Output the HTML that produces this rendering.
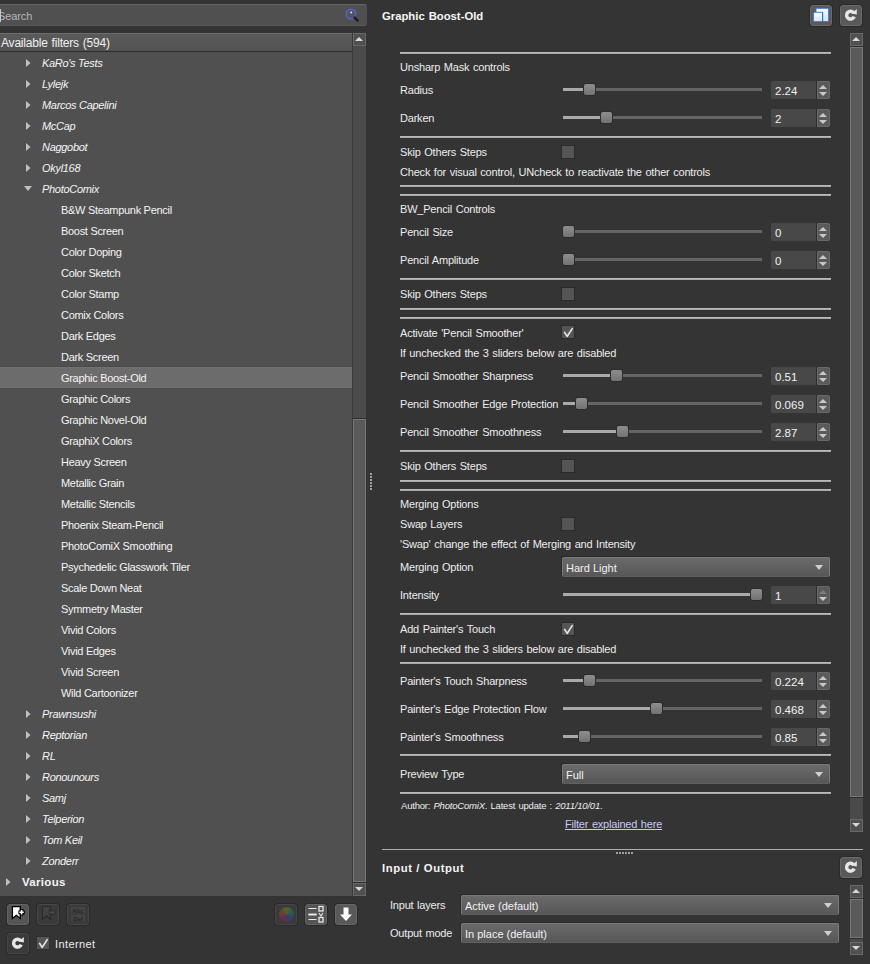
<!DOCTYPE html>
<html><head><meta charset="utf-8">
<style>
*{box-sizing:border-box;margin:0;padding:0}
html,body{width:870px;height:964px;overflow:hidden;background:#343434;font-family:"Liberation Sans",sans-serif;font-size:11px;color:#ececec}
.a{position:absolute}
.t{position:absolute;white-space:nowrap;line-height:13px;letter-spacing:-0.2px;word-spacing:0.8px}
/* left */
#search{left:-4px;top:4px;width:371px;height:22px;background:#505050;border-top:1px solid #666;border-bottom:1px solid #5a5a5a;border-radius:3px}
#hdr{left:0;top:33px;width:352px;height:19px;background:linear-gradient(#5a5a5a,#535353);border-top:1px solid #6c6c6c;border-bottom:1px solid #2b2b2b}
#tree{left:0;top:52px;width:352px;height:844px;background:#505050;overflow:hidden;color:#f4f4f4}
#tsb{left:352px;top:33px;width:14px;height:863px;background:#4b4b4b;border-left:1px solid #3a3a3a}
.row{position:absolute;left:0;width:352px;height:21px}
.row span{position:absolute;top:5px;white-space:nowrap;line-height:13px;letter-spacing:-0.3px}
.cat span{font-style:italic}
.arr{position:absolute;width:4.5px;height:8px;top:7px;background:#c0c0c0;clip-path:polygon(0 0,100% 50%,0 100%)}
.arrd{position:absolute;width:8px;height:5px;top:8px;background:#c0c0c0;clip-path:polygon(0 0,100% 0,50% 100%)}
.sel{background:#6c6c6c;box-shadow:inset 0 1px 0 #727272,inset 0 -1px 0 #727272,0 -1px 0 #4b4b4b,0 1px 0 #4b4b4b}
.sbbtn{position:absolute;left:0;width:13px;height:13px;background:#505050;border:1px solid #686868}
.tri-up{position:absolute;width:0;height:0;border-left:4px solid transparent;border-right:4px solid transparent;border-bottom:4px solid #d8d8d8}
.tri-dn{position:absolute;width:0;height:0;border-left:4px solid transparent;border-right:4px solid transparent;border-top:4px solid #d8d8d8}
.handle{position:absolute;background:#5a5a5a;border:1px solid #777;box-shadow:0 -1px 0 #2e2e2e,0 1px 0 #2e2e2e}
.btn{position:absolute;width:22px;height:21px;border-radius:3px;background:#5c5c5c;border:1px solid #2a2a2a;box-shadow:inset 0 1px 0 #6c6c6c}
.btn.dis{background:#3d3d3d;box-shadow:inset 0 1px 0 #474747}

/* right */
.sep{position:absolute;left:400px;width:431px;height:2px;background:#a9a9a9;border-top:1px solid #b9b9b9}
.groove{position:absolute;left:563px;width:199px;height:3px;background:#656565}
.gfill{position:absolute;left:563px;height:3px;background:#aaaaaa}
.knob{position:absolute;width:11px;height:11px;border-radius:2px;background:linear-gradient(#8e8e8e,#727272);box-shadow:0 0 0 1px #2c2c2c}
.spin{position:absolute;left:771px;width:59px;height:18px;background:#484848;border-radius:1.5px}
.spin span{position:absolute;left:4px;top:4px;line-height:13px;font-size:11.5px;color:#f2f2f2}
.sbt{position:absolute;left:46px;top:0;width:13px;height:18px;background:#5a5a5a;border:1px solid #696969;border-radius:0 2px 2px 0;box-shadow:-1px 0 0 #2e2e2e}
.su{position:absolute;left:1px;top:2.5px;width:0;height:0;border-left:4.5px solid transparent;border-right:4.5px solid transparent;border-bottom:4px solid #c8c8c8}
.sd{position:absolute;left:1px;top:9.8px;width:0;height:0;border-left:4.5px solid transparent;border-right:4.5px solid transparent;border-top:4px solid #c8c8c8}
.chk{position:absolute;left:561px;width:14px;height:14px;background:#555;border:1px solid #2a2a2a}
.combo{position:absolute;height:20px;border-radius:2px;box-shadow:-1px -1px 0 #2a2a2a;background:linear-gradient(#6a6a6a,#575757);border:1px solid #7a7a7a;border-bottom-color:#606060}
.combo span{position:absolute;left:3px;top:4px;line-height:13px;font-size:11px;color:#f2f2f2}
.cd{position:absolute;right:6px;top:7px;width:0;height:0;border-left:4px solid transparent;border-right:4px solid transparent;border-top:5px solid #d0d0d0}
.ibtn{position:absolute;width:22px;height:21px;border-radius:3px;background:#595959;border:1px solid #6a6a6a;box-shadow:0 0 0 1px #2a2a2a}
</style></head><body>
<!-- LEFT PANEL -->
<div id="search" class="a"></div>
<div class="t" style="left:-2px;top:10px;color:#b5b5b5;font-size:11px;letter-spacing:-0.1px">Search</div><div class="a" style="left:0;top:9px;width:1px;height:13px;background:#c8c8c8"></div>
<svg class="a" style="left:344px;top:7px" width="16" height="16" viewBox="0 0 16 16"><circle cx="7" cy="7" r="4.8" fill="#545460" stroke="#5565d0" stroke-width="1.4"/><line x1="10.6" y1="10.6" x2="13.6" y2="13.6" stroke="#1c1c1c" stroke-width="2.4" stroke-linecap="round"/><circle cx="7.2" cy="5.6" r="1" fill="#dcdcdc"/></svg>
<div id="hdr" class="a"></div>
<div class="t" style="left:1px;top:37px;font-size:12px;color:#f0f0f0">Available filters (594)</div>
<div id="tree" class="a">
<div class="row cat" style="top:0px"><div class="arr" style="left:26px"></div><span style="left:42px">KaRo's Tests</span></div>
<div class="row cat" style="top:21px"><div class="arr" style="left:26px"></div><span style="left:42px">Lylejk</span></div>
<div class="row cat" style="top:42px"><div class="arr" style="left:26px"></div><span style="left:42px">Marcos Capelini</span></div>
<div class="row cat" style="top:63px"><div class="arr" style="left:26px"></div><span style="left:42px">McCap</span></div>
<div class="row cat" style="top:84px"><div class="arr" style="left:26px"></div><span style="left:42px">Naggobot</span></div>
<div class="row cat" style="top:105px"><div class="arr" style="left:26px"></div><span style="left:42px">Okyl168</span></div>
<div class="row cat" style="top:126px"><div class="arrd" style="left:24px"></div><span style="left:42px">PhotoComix</span></div>
<div class="row" style="top:147px"><span style="left:61px">B&amp;W Steampunk Pencil</span></div>
<div class="row" style="top:168px"><span style="left:61px">Boost Screen</span></div>
<div class="row" style="top:189px"><span style="left:61px">Color Doping</span></div>
<div class="row" style="top:210px"><span style="left:61px">Color Sketch</span></div>
<div class="row" style="top:231px"><span style="left:61px">Color Stamp</span></div>
<div class="row" style="top:252px"><span style="left:61px">Comix Colors</span></div>
<div class="row" style="top:273px"><span style="left:61px">Dark Edges</span></div>
<div class="row" style="top:294px"><span style="left:61px">Dark Screen</span></div>
<div class="row sel" style="top:315px"><span style="left:61px">Graphic Boost-Old</span></div>
<div class="row" style="top:336px"><span style="left:61px">Graphic Colors</span></div>
<div class="row" style="top:357px"><span style="left:61px">Graphic Novel-Old</span></div>
<div class="row" style="top:378px"><span style="left:61px">GraphiX Colors</span></div>
<div class="row" style="top:399px"><span style="left:61px">Heavy Screen</span></div>
<div class="row" style="top:420px"><span style="left:61px">Metallic Grain</span></div>
<div class="row" style="top:441px"><span style="left:61px">Metallic Stencils</span></div>
<div class="row" style="top:462px"><span style="left:61px">Phoenix Steam-Pencil</span></div>
<div class="row" style="top:483px"><span style="left:61px">PhotoComiX Smoothing</span></div>
<div class="row" style="top:504px"><span style="left:61px">Psychedelic Glasswork Tiler</span></div>
<div class="row" style="top:525px"><span style="left:61px">Scale Down Neat</span></div>
<div class="row" style="top:546px"><span style="left:61px">Symmetry Master</span></div>
<div class="row" style="top:567px"><span style="left:61px">Vivid Colors</span></div>
<div class="row" style="top:588px"><span style="left:61px">Vivid Edges</span></div>
<div class="row" style="top:609px"><span style="left:61px">Vivid Screen</span></div>
<div class="row" style="top:630px"><span style="left:61px">Wild Cartoonizer</span></div>
<div class="row cat" style="top:651px"><div class="arr" style="left:26px"></div><span style="left:42px">Prawnsushi</span></div>
<div class="row cat" style="top:672px"><div class="arr" style="left:26px"></div><span style="left:42px">Reptorian</span></div>
<div class="row cat" style="top:693px"><div class="arr" style="left:26px"></div><span style="left:42px">RL</span></div>
<div class="row cat" style="top:714px"><div class="arr" style="left:26px"></div><span style="left:42px">Ronounours</span></div>
<div class="row cat" style="top:735px"><div class="arr" style="left:26px"></div><span style="left:42px">Samj</span></div>
<div class="row cat" style="top:756px"><div class="arr" style="left:26px"></div><span style="left:42px">Telperion</span></div>
<div class="row cat" style="top:777px"><div class="arr" style="left:26px"></div><span style="left:42px">Tom Keil</span></div>
<div class="row cat" style="top:798px"><div class="arr" style="left:26px"></div><span style="left:42px">Zonderr</span></div>
<div class="row" style="top:819px"><div class="arr" style="left:6px"></div><span style="left:22px;font-weight:bold;font-size:11.5px;letter-spacing:0.3px">Various</span></div>

</div>
<div id="tsb" class="a">
  <div class="sbbtn" style="top:0"><div class="tri-up" style="left:1px;top:3px"></div></div>
  <div class="handle" style="left:0;top:386px;width:13px;height:463px"></div>
  <div class="sbbtn" style="top:850px"><div class="tri-dn" style="left:1px;top:3px"></div></div>
</div>

<!-- RIGHT PANEL -->
<div class="t" style="left:382px;top:10px;font-weight:bold;font-size:11.3px;color:#f6f6f6;letter-spacing:0">Graphic Boost-Old</div>
<div class="ibtn" style="left:810px;top:5px"><svg width="22" height="21" viewBox="0 0 22 21" style="position:absolute;left:-1px;top:-1px"><defs><linearGradient id="g1" x1="0" y1="0" x2="0.3" y2="1"><stop offset="0" stop-color="#ffffff"/><stop offset="1" stop-color="#cfe6fb"/></linearGradient></defs><rect x="6" y="3.3" width="12.6" height="13.2" fill="url(#g1)" stroke="#3a7ad0" stroke-width="0.9"/><rect x="3.6" y="7.3" width="9" height="9.3" fill="url(#g1)" stroke="#3a7ad0" stroke-width="0.9"/><path d="M12.6 7.3 V17" stroke="#2f6fc6" stroke-width="1.1"/></svg></div>
<div class="ibtn" style="left:840px;top:5px"><svg width="22" height="21" viewBox="0 0 22 21" style="position:absolute;left:-1px;top:-1px"><path d="M13.69 7.96 A3.9 3.9 0 1 0 14.16 11.53" fill="none" stroke="#e6e6e6" stroke-width="3.5"/><path d="M11.6 8.6 L16.8 4.0 L16.8 9.6 Z" fill="#e6e6e6"/></svg></div>
<div class="a" style="left:850px;top:33px;width:13px;height:799px;background:#4a4a4a">
  <div class="a" style="left:0;top:0;width:13px;height:13px;background:#505050;border:1px solid #686868"><div class="tri-up" style="left:1px;top:3px"></div></div>
  <div class="handle" style="left:0;top:14px;width:13px;height:750px"></div>
  <div class="a" style="left:0;top:786px;width:13px;height:13px;background:#505050;border:1px solid #686868"><div class="tri-dn" style="left:1px;top:3px"></div></div>
</div>
<div class="sep" style="top:52px"></div>
<div class="t" style="left:400px;top:61px;">Unsharp Mask controls</div>
<div class="t" style="left:400px;top:84px;">Radius</div>
<div class="groove" style="top:88px"></div>
<div class="gfill" style="top:88px;width:21px"></div>
<div class="knob" style="left:584px;top:84px"></div>
<div class="spin" style="top:81px"><span>2.24</span><div class="sbt"><i class="su"></i><i class="sd"></i></div></div>
<div class="t" style="left:400px;top:112px;">Darken</div>
<div class="groove" style="top:116px"></div>
<div class="gfill" style="top:116px;width:38px"></div>
<div class="knob" style="left:601px;top:112px"></div>
<div class="spin" style="top:109px"><span>2</span><div class="sbt"><i class="su"></i><i class="sd"></i></div></div>
<div class="sep" style="top:136px"></div>
<div class="t" style="left:400px;top:146px;">Skip Others Steps</div>
<div class="chk" style="top:145px"></div>
<div class="t" style="left:400px;top:166px;">Check for visual control, UNcheck to reactivate the other controls</div>
<div class="sep" style="top:185px"></div>
<div class="sep" style="top:194px"></div>
<div class="t" style="left:400px;top:203px;">BW_Pencil Controls</div>
<div class="t" style="left:400px;top:226px;">Pencil Size</div>
<div class="groove" style="top:230px"></div>
<div class="gfill" style="top:230px;width:0px"></div>
<div class="knob" style="left:563px;top:226px"></div>
<div class="spin" style="top:223px"><span>0</span><div class="sbt"><i class="su"></i><i class="sd"></i></div></div>
<div class="t" style="left:400px;top:254px;">Pencil Amplitude</div>
<div class="groove" style="top:258px"></div>
<div class="gfill" style="top:258px;width:0px"></div>
<div class="knob" style="left:563px;top:254px"></div>
<div class="spin" style="top:251px"><span>0</span><div class="sbt"><i class="su"></i><i class="sd"></i></div></div>
<div class="sep" style="top:278px"></div>
<div class="t" style="left:400px;top:288px;">Skip Others Steps</div>
<div class="chk" style="top:287px"></div>
<div class="sep" style="top:308px"></div>
<div class="sep" style="top:317px"></div>
<div class="t" style="left:400px;top:327px;">Activate 'Pencil Smoother'</div>
<div class="chk" style="top:325px"><svg width="13" height="13" viewBox="0 0 13 13" style="position:absolute;left:0;top:0"><path d="M2.6 6.4 L5.2 10.4 L10.2 2.6" fill="none" stroke="#e6e6e6" stroke-width="1.7" stroke-linecap="round" stroke-linejoin="round"/></svg></div>
<div class="t" style="left:400px;top:347px;">If unchecked the 3 sliders below are disabled</div>
<div class="t" style="left:400px;top:370px;">Pencil Smoother Sharpness</div>
<div class="groove" style="top:374px"></div>
<div class="gfill" style="top:374px;width:48px"></div>
<div class="knob" style="left:611px;top:370px"></div>
<div class="spin" style="top:367px"><span>0.51</span><div class="sbt"><i class="su"></i><i class="sd"></i></div></div>
<div class="t" style="left:400px;top:398px;">Pencil Smoother Edge Protection</div>
<div class="groove" style="top:402px"></div>
<div class="gfill" style="top:402px;width:13px"></div>
<div class="knob" style="left:576px;top:398px"></div>
<div class="spin" style="top:395px"><span>0.069</span><div class="sbt"><i class="su"></i><i class="sd"></i></div></div>
<div class="t" style="left:400px;top:426px;">Pencil Smoother Smoothness</div>
<div class="groove" style="top:430px"></div>
<div class="gfill" style="top:430px;width:54px"></div>
<div class="knob" style="left:617px;top:426px"></div>
<div class="spin" style="top:423px"><span>2.87</span><div class="sbt"><i class="su"></i><i class="sd"></i></div></div>
<div class="sep" style="top:450px"></div>
<div class="t" style="left:400px;top:460px;">Skip Others Steps</div>
<div class="chk" style="top:459px"></div>
<div class="sep" style="top:480px"></div>
<div class="sep" style="top:489px"></div>
<div class="t" style="left:400px;top:498px;">Merging Options</div>
<div class="t" style="left:400px;top:518px;">Swap Layers</div>
<div class="chk" style="top:517px"></div>
<div class="t" style="left:400px;top:538px;">'Swap' change the effect of Merging and Intensity</div>
<div class="t" style="left:400px;top:561px;">Merging Option</div>
<div class="combo" style="left:562px;top:557px;width:268px"><span>Hard Light</span><i class="cd"></i></div>
<div class="t" style="left:400px;top:589px;">Intensity</div>
<div class="groove" style="top:593px"></div>
<div class="gfill" style="top:593px;width:188px"></div>
<div class="knob" style="left:751px;top:589px"></div>
<div class="spin" style="top:586px"><span>1</span><div class="sbt"><i class="su" style="border-bottom-color:#7c7c7c"></i><i class="sd"></i></div></div>
<div class="sep" style="top:613px"></div>
<div class="t" style="left:400px;top:623px;">Add Painter's Touch</div>
<div class="chk" style="top:622px"><svg width="13" height="13" viewBox="0 0 13 13" style="position:absolute;left:0;top:0"><path d="M2.6 6.4 L5.2 10.4 L10.2 2.6" fill="none" stroke="#e6e6e6" stroke-width="1.7" stroke-linecap="round" stroke-linejoin="round"/></svg></div>
<div class="t" style="left:400px;top:643px;">If unchecked the 3 sliders below are disabled</div>
<div class="sep" style="top:662px"></div>
<div class="t" style="left:400px;top:675px;">Painter's Touch Sharpness</div>
<div class="groove" style="top:679px"></div>
<div class="gfill" style="top:679px;width:21px"></div>
<div class="knob" style="left:584px;top:675px"></div>
<div class="spin" style="top:672px"><span>0.224</span><div class="sbt"><i class="su"></i><i class="sd"></i></div></div>
<div class="t" style="left:400px;top:703px;">Painter's Edge Protection Flow</div>
<div class="groove" style="top:707px"></div>
<div class="gfill" style="top:707px;width:88px"></div>
<div class="knob" style="left:651px;top:703px"></div>
<div class="spin" style="top:700px"><span>0.468</span><div class="sbt"><i class="su"></i><i class="sd"></i></div></div>
<div class="t" style="left:400px;top:731px;">Painter's Smoothness</div>
<div class="groove" style="top:735px"></div>
<div class="gfill" style="top:735px;width:16px"></div>
<div class="knob" style="left:579px;top:731px"></div>
<div class="spin" style="top:728px"><span>0.85</span><div class="sbt"><i class="su"></i><i class="sd"></i></div></div>
<div class="sep" style="top:754px"></div>
<div class="t" style="left:400px;top:768px;">Preview Type</div>
<div class="combo" style="left:562px;top:764px;width:268px"><span>Full</span><i class="cd"></i></div>
<div class="sep" style="top:792px"></div>
<div class="t" style="left:401px;top:799px;font-size:9.5px">Author: <i>PhotoComiX</i>. Latest update : <i>2011/10/01</i>.</div>
<div class="t" style="left:565px;top:818px;color:#c9c9f2;text-decoration:underline">Filter explained here</div>

<!-- splitter dots -->
<div class="a" style="left:370px;top:473px;width:2px;height:17px;background:repeating-linear-gradient(#a0a0a0 0 2px,transparent 2px 3px)"></div>
<div class="a" style="left:616px;top:852px;width:18px;height:2px;background:repeating-linear-gradient(90deg,#a0a0a0 0 2px,transparent 2px 3px)"></div>
<!-- INPUT / OUTPUT -->
<div class="a" style="left:382px;top:849px;width:481px;height:1px;background:#adadad"></div>
<div class="t" style="left:382px;top:862px;font-weight:bold;font-size:11.3px;color:#f4f4f4;word-spacing:0;letter-spacing:0.6px">Input / Output</div>
<div class="ibtn" style="left:840px;top:857px"><svg width="22" height="21" viewBox="0 0 22 21" style="position:absolute;left:-1px;top:-1px"><path d="M13.69 7.96 A3.9 3.9 0 1 0 14.16 11.53" fill="none" stroke="#e6e6e6" stroke-width="3.5"/><path d="M11.6 8.6 L16.8 4.0 L16.8 9.6 Z" fill="#e6e6e6"/></svg></div>
<div class="t" style="left:390px;top:899px">Input layers</div>
<div class="combo" style="left:461px;top:895px;width:378px"><span>Active (default)</span><i class="cd"></i></div>
<div class="t" style="left:390px;top:927px">Output mode</div>
<div class="combo" style="left:461px;top:923px;width:378px"><span>In place (default)</span><i class="cd"></i></div>
<div class="a" style="left:850px;top:885px;width:13px;height:70px;background:#4a4a4a">
  <div class="a" style="left:0;top:0;width:13px;height:13px;background:#505050;border:1px solid #686868"><div class="tri-up" style="left:1px;top:3px"></div></div>
  <div class="handle" style="left:0;top:14px;width:13px;height:39px"></div>
  <div class="a" style="left:0;top:57px;width:13px;height:13px;background:#505050;border:1px solid #686868"><div class="tri-dn" style="left:1px;top:3px"></div></div>
</div>
<!-- bottom-left buttons -->
<div class="ibtn" style="left:7px;top:904px;background:#555;border-color:#636363"><svg width="22" height="21" viewBox="0 0 22 21" style="position:absolute;left:-1px;top:-1px"><path d="M5.4 2.6 H13.3 V14.4 L9.35 11.3 L5.4 14.4 Z" fill="#fff" stroke="#000" stroke-width="1.3" stroke-linejoin="miter"/><path d="M11.4 8.3 H17.8 M14.6 5.1 V11.5" stroke="#000" stroke-width="3.8"/><path d="M12.4 8.3 H16.8 M14.6 6.1 V10.5" stroke="#fff" stroke-width="1.6"/></svg></div>
<div class="ibtn" style="left:37px;top:904px;background:#3a3a3a;border-color:#474747"><svg width="22" height="21" viewBox="0 0 22 21" style="position:absolute;left:-1px;top:-1px"><path d="M5.5 2.5 H13.5 V15.5 L9.5 11.5 L5.5 15.5 Z" fill="#424242" stroke="#2a2a2a" stroke-width="1.2" stroke-linejoin="round"/><rect x="12" y="7" width="6" height="3" fill="#4a4a4a" stroke="#2a2a2a" stroke-width="0.8"/></svg></div>
<div class="ibtn" style="left:67px;top:904px;background:#3a3a3a;border-color:#474747"><svg width="22" height="21" viewBox="0 0 22 21" style="position:absolute;left:-1px;top:-1px"><rect x="4" y="3" width="14" height="6" fill="#444"/><rect x="4" y="11" width="14" height="6" fill="#444"/><text x="11" y="8.6" font-size="6" font-family="Liberation Sans" font-weight="bold" text-anchor="middle" fill="#262626">Abc</text><text x="11" y="16.6" font-size="6" font-family="Liberation Sans" font-weight="bold" text-anchor="middle" fill="#262626">Def</text><rect x="10.5" y="9.5" width="1" height="1" fill="#7a5a30"/></svg></div>
<div class="ibtn" style="left:275px;top:904px;background:#3a3a3a;border-color:#474747"><div class="a" style="left:3px;top:2px;width:15px;height:15px;border-radius:50%;opacity:0.42;filter:blur(0.7px);background:conic-gradient(from 0deg,#7a9a20,#20906a,#2a50a0,#6a2a9a,#a02a50,#9a5a20,#7a9a20)"></div></div>
<div class="ibtn" style="left:305px;top:904px;background:#555;border-color:#636363"><svg width="22" height="21" viewBox="0 0 22 21" style="position:absolute;left:-1px;top:-1px"><path d="M3.5 4.5 H11.5 M3.5 10.5 H11.5 M3.5 15.5 H11.5" stroke="#e8e8e8" stroke-width="1.2"/><path d="M3.5 10.5 H11.5" stroke="#e8e8e8" stroke-width="2"/><rect x="14" y="2.5" width="4" height="4.5" fill="none" stroke="#e8e8e8" stroke-width="1.3"/><rect x="14" y="13.5" width="4" height="4.5" fill="none" stroke="#e8e8e8" stroke-width="1.3"/><path d="M14 9 L16 12 L18 9" fill="none" stroke="#e8e8e8" stroke-width="1.1"/></svg></div>
<div class="ibtn" style="left:335px;top:904px;background:#595959;border-color:#666"><svg width="22" height="21" viewBox="0 0 22 21" style="position:absolute;left:-1px;top:-1px"><path d="M8.5 3.5 H13.5 V10.5 H17 L11 17 L5 10.5 H8.5 Z" fill="#fafafa"/></svg></div>
<div class="ibtn" style="left:7px;top:933px;background:#3a3a3a;border-color:#474747"><svg width="22" height="21" viewBox="0 0 22 21" style="position:absolute;left:-1px;top:-1px"><path d="M13.69 7.96 A3.9 3.9 0 1 0 14.16 11.53" fill="none" stroke="#e6e6e6" stroke-width="3.5"/><path d="M11.6 8.6 L16.8 4.0 L16.8 9.6 Z" fill="#e6e6e6"/></svg></div>
<div class="chk" style="left:36px;top:936px;background:#555;border-color:#2f2f2f"><svg width="13" height="13" viewBox="0 0 13 13" style="position:absolute;left:0;top:0"><path d="M2.6 6.4 L5.2 10.4 L10.2 2.6" fill="none" stroke="#e6e6e6" stroke-width="1.7" stroke-linecap="round" stroke-linejoin="round"/></svg></div>
<div class="t" style="left:55px;top:938px;letter-spacing:0.4px">Internet</div>
</body></html>
